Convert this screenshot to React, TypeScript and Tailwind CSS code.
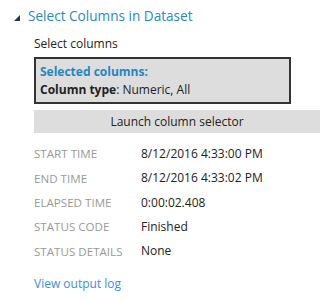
export default function App() {
  const rows: [string, string][] = [
    ["START TIME", "8/12/2016 4:33:00 PM"],
    ["END TIME", "8/12/2016 4:33:02 PM"],
    ["ELAPSED TIME", "0:00:02.408"],
    ["STATUS CODE", "Finished"],
    ["STATUS DETAILS", "None"],
  ];

  return (
    <div className="h-[301px] w-[335px] bg-white font-['Open_Sans',sans-serif] text-[#222]">
      <div className="flex items-center pl-[14px] pt-[6px]">
        <svg width="6" height="6" viewBox="0 0 6 6" className="mr-[8px] mt-[3px]">
          <polygon points="6,0 6,6 0,6" fill="#1f3a4d" />
        </svg>
        <span className="text-[13.6px] leading-[20px] text-[#2b89c0]">Select Columns in Dataset</span>
      </div>

      <div className="pl-[34px] pr-[15px]">
        <div className="mt-[10px] text-[12px] leading-[16px]">Select columns</div>

        <div className="mt-[5px] w-[257px] border-2 border-[#333] bg-[#dddddd] px-[4px] pt-[4px] pb-[3px] text-[12px] leading-[18px]">
          <div className="font-bold text-[#1f86c4]">Selected columns:</div>
          <div>
            <span className="font-bold">Column type</span>: Numeric, All
          </div>
        </div>

        <button className="mt-[6px] flex h-[23px] w-[286px] items-center justify-center bg-[#dddddd] text-[12px] text-[#222]">
          Launch column selector
        </button>

        <div className="mt-[9px] flex flex-col">
          {rows.map(([k, v]) => (
            <div key={k} className="flex h-[24.3px] items-center text-[12px]">
              <span className="w-[107px] text-[11.6px] text-[#999]">{k}</span>
              <span>{v}</span>
            </div>
          ))}
        </div>

        <div className="mt-[12px] text-[12px] leading-[17px] text-[#3d8fd6]">View output log</div>
      </div>
    </div>
  );
}
